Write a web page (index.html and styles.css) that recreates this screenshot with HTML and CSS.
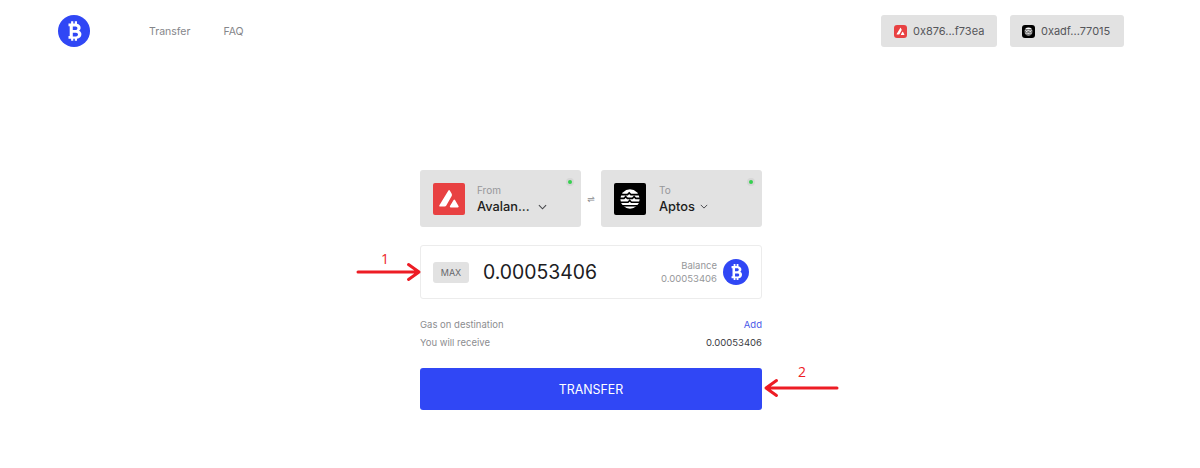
FILE: index.html
```html
<!DOCTYPE html>
<html lang="en">
<head>
<meta charset="utf-8">
<title>Bridge transfer</title>
<link rel="stylesheet" href="styles.css">
</head>
<body>
<svg class="defs" width="0" height="0" aria-hidden="true">
  <defs>
    <symbol id="btc" viewBox="0 0 32 32">
      <circle cx="16" cy="16" r="16" fill="#3047f5"/>
      <path fill="#fff" fill-rule="evenodd" d="M10.500 8.600h2.600V6.200h2.200v2.400h1.500V6.200H19v2.600c2.200.5 3.600 2 3.600 4 0 1.400-.6 2.400-1.600 3 1.500.6 2.400 1.900 2.400 3.500 0 2.400-1.700 4.100-4.400 4.400v2.100h-2.200v-2h-1.500v2h-2.200v-2h-2.600v-2.700h1.200V11.300h-1.200zm4.300 2.800v3.600h2.800c1.100 0 1.800-.7 1.800-1.800s-.7-1.800-1.800-1.800zm0 6.300v3.800H18c1.200 0 2-.8 2-1.900s-.8-1.900-2-1.900z"/>
    </symbol>
    <symbol id="avax" viewBox="0 0 32 32">
      <rect width="32" height="32" fill="#e84142"/>
      <path fill="#fff" d="M15.400 7.500c.4-.7 1-.7 1.400 0l1.900 3.300c.4.800.4 1.500 0 2.300l-5.400 9.400c-.4.700-.9 1-1.700 1H7.200c-.8 0-1.200-.6-.8-1.300z"/>
      <path fill="#fff" d="M20.600 16.900c.4-.7 1-.7 1.400 0l3.500 6.200c.4.600 0 1.300-.7 1.300h-7.100c-.7 0-1.100-.7-.7-1.300z"/>
    </symbol>
    <symbol id="aptos" viewBox="0 0 32 32">
      <rect width="32" height="32" fill="#000"/>
      <circle cx="16" cy="16" r="9.700" fill="#fff"/>
      <path fill="none" stroke="#000" stroke-width="1.600" d="M5 11.600h8.500l1.700-1.700 1.700 1.700H27M5 15.400h5l1.700-1.700 1.700 1.700h5l1.700-1.700 1.700 1.700h5M5 19.200h9l1.700-1.700 1.700 1.700H27M5 22.800h22"/>
    </symbol>
    <symbol id="chev" viewBox="0 0 10 6">
      <path fill="none" stroke="currentColor" stroke-width="1.200" d="M1 1l4 4 4-4"/>
    </symbol>
  </defs>
</svg>

<header class="topbar">
  <div class="topbar-left">
    <svg class="logo"><use href="#btc"/></svg>
    <nav class="nav">
      <a class="nav-link">Transfer</a>
      <a class="nav-link">FAQ</a>
    </nav>
  </div>
  <div class="wallets">
    <button class="wallet wallet-a"><svg class="wallet-icon"><use href="#avax"/></svg>0x876...f73ea</button>
    <button class="wallet wallet-b"><svg class="wallet-icon"><use href="#aptos"/></svg>0xadf...77015</button>
  </div>
</header>

<main class="main">
  <section class="panel">
    <div class="chains">
      <div class="chain">
        <svg class="chain-icon"><use href="#avax"/></svg>
        <div class="chain-text">
          <span class="chain-label">From</span>
          <span class="chain-name"><span class="chain-title">Avalan...</span><svg class="chev chev-from"><use href="#chev"/></svg></span>
        </div>
        <span class="status"></span>
      </div>
      <span class="swap">⇌</span>
      <div class="chain chain-to">
        <svg class="chain-icon"><use href="#aptos"/></svg>
        <div class="chain-text">
          <span class="chain-label">To</span>
          <span class="chain-name"><span class="chain-title">Aptos</span><svg class="chev chev-to"><use href="#chev"/></svg></span>
        </div>
        <span class="status"></span>
      </div>
    </div>

    <div class="amount">
      <span class="max">MAX</span>
      <span class="value">0.00053406</span>
      <div class="balance">
        <span>Balance</span>
        <span>0.00053406</span>
      </div>
      <svg class="token"><use href="#btc"/></svg>
      <div class="note note-1">
        <span class="note-num">1</span>
        <svg class="arrow" width="66" height="20" viewBox="0 0 66 20"><path fill="none" stroke="#ed1c24" stroke-width="3" stroke-linecap="round" stroke-linejoin="round" d="M2 10h61M52.500 2.500L63 10l-10.500 7.500"/></svg>
      </div>
    </div>

    <div class="rows">
      <div class="row"><span>Gas on destination</span><a class="add">Add</a></div>
      <div class="row"><span>You will receive</span><span class="receive">0.00053406</span></div>
    </div>

    <div class="submit">
      <button class="transfer">TRANSFER</button>
      <div class="note note-2">
        <span class="note-num">2</span>
        <svg class="arrow" width="76" height="20" viewBox="0 0 76 20"><path fill="none" stroke="#ed1c24" stroke-width="3" stroke-linecap="round" stroke-linejoin="round" d="M74 10H3M13.500 2.500L3 10l10.500 7.500"/></svg>
      </div>
    </div>
  </section>
</main>
</body>
</html>
```

FILE: styles.css
```css
* { box-sizing: border-box; }

html, body { margin: 0; height: 100%; }

body {
  background: #fff;
  color: #1d1d1f;
  font-family: Inter, "Liberation Sans", sans-serif;
  overflow: hidden;
}

.defs { position: absolute; }

.topbar {
  display: flex;
  justify-content: space-between;
  align-items: center;
  height: 62px;
  padding: 0 76px 0 58px;
}

.topbar-left { display: flex; align-items: center; }

.logo { width: 32px; height: 32px; }

.nav {
  display: flex;
  gap: 33px;
  margin-left: 59px;
  padding-top: 1px;
}

.nav-link {
  font-size: 10.500px;
  line-height: 16px;
  color: #85868a;
}

.wallets { display: flex; gap: 13px; }

.wallet {
  display: flex;
  align-items: center;
  gap: 6px;
  height: 32px;
  padding: 0 0 0 13px;
  border: 0;
  border-radius: 3px;
  background: #e2e2e2;
  color: #55565a;
  font: 11px Inter, "Liberation Sans", sans-serif;
}

.wallet-a { width: 116px; }
.wallet-b { width: 114px; padding-left: 12px; }

.wallet-icon { width: 13px; height: 13px; border-radius: 3px; }

.main {
  display: flex;
  justify-content: center;
  padding: 108px 18px 0 0;
}

.panel { width: 342px; }

.chains {
  display: flex;
  align-items: center;
  justify-content: space-between;
}

.chain {
  position: relative;
  display: flex;
  align-items: center;
  width: 161px;
  height: 57px;
  padding-left: 13px;
  border-radius: 3px;
  background: #e2e2e2;
}

.chain-icon { width: 32px; height: 32px; flex: none; border-radius: 2px; }

.chain-text {
  display: flex;
  flex-direction: column;
  margin-left: 12px;
  padding-top: 2px;
}

.chain-to .chain-text { margin-left: 13px; }

.chain-label {
  font-size: 10px;
  line-height: 13px;
  color: #96979a;
}

.chain-name {
  display: flex;
  align-items: center;
  margin-top: 1px;
  line-height: 18px;
}

.chain-title {
  font-size: 12.800px;
  font-weight: 500;
  color: #1d1d20;
}

.chev { width: 9px; height: 6px; color: #45464a; }
.chev-from { margin-left: 8px; }
.chev-to { width: 8px; height: 5px; margin-left: 5px; }

.status {
  position: absolute;
  top: 10px;
  right: 9px;
  width: 4px;
  height: 4px;
  border-radius: 50%;
  background: #35d04f;
  box-shadow: 0 0 0 2px #d6d6d6;
}

.swap {
  width: 20px;
  text-align: center;
  font-size: 9px;
  color: #8a8b8e;
  font-family: "DejaVu Sans", sans-serif;
}

.amount {
  position: relative;
  display: flex;
  align-items: center;
  height: 54px;
  margin-top: 18px;
  padding: 0 12px;
  border: 1px solid #ececec;
  border-radius: 3px;
}

.max {
  display: flex;
  align-items: center;
  justify-content: center;
  width: 36px;
  height: 21px;
  border-radius: 3px;
  background: #e2e2e2;
  font-size: 9px;
  color: #66676b;
}

.value {
  margin-left: 14px;
  font-size: 19.400px;
  color: #1c1c1f;
}

.balance {
  display: flex;
  flex-direction: column;
  align-items: flex-end;
  margin-left: auto;
  font-size: 9.500px;
  line-height: 13px;
  color: #96979a;
}

.token { width: 26px; height: 26px; margin-left: 6px; flex: none; }

.note {
  position: absolute;
  color: #ed1c24;
  font-family: "Open Sans", sans-serif;
}

.note-num {
  position: absolute;
  font-size: 14px;
  line-height: 18px;
}

.arrow { display: block; }

.note-1 { left: -65px; top: 16px; }
.note-1 .note-num { left: 25px; top: -12px; }

.note-2 { left: 343px; top: 10px; }
.note-2 .note-num { left: 35px; top: -15px; }

.rows {
  display: flex;
  flex-direction: column;
  gap: 5px;
  margin-top: 19px;
}

.row {
  display: flex;
  justify-content: space-between;
  font-size: 9.500px;
  line-height: 13px;
  color: #8c8d90;
}

.add { color: #4a58e8; }
.receive { color: #3a3b3f; }

.submit {
  position: relative;
  margin-top: 19px;
}

.transfer {
  display: block;
  width: 100%;
  height: 42px;
  border: 0;
  border-radius: 3px;
  background: #3047f5;
  color: #fff;
  font: 12.400px Inter, "Liberation Sans", sans-serif;
}
```
